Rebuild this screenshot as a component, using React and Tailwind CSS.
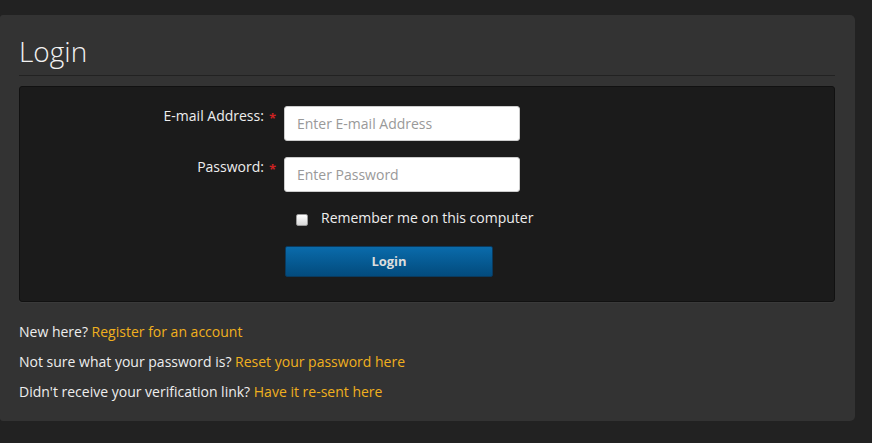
export default function App() {
  const font = { fontFamily: '"Open Sans", "Liberation Sans", sans-serif' };
  return (
    <div className="w-[872px] h-[443px] bg-[#222222] pt-[15px] overflow-hidden" style={font}>
      <div className="w-[855px] h-[406px] bg-[#333333] rounded-r-[5px] rounded-l-[3px] pt-[16px] pl-[19px] pr-[20px]">
        <div className="border-b border-[#222222] pb-[4px]">
          <h1 className="text-[28px] leading-[40px] font-light text-[#f2f2f2]">Login</h1>
        </div>
        <div className="mt-[10px] bg-[#1b1b1b] border border-[#111111] rounded-[3px] pt-[19px] pb-[24px] shadow-[0_1px_0_#3a3a3a]">
          <div className="flex items-start">
            <div className="w-[256px] text-right text-[14px] leading-5 text-[#eeeeee]">
              E-mail Address:<span className="relative top-[2px] text-[#cc2222] ml-[5px] font-bold text-[13px]">*</span>
            </div>
            <input
              className="ml-[8px] w-[236px] h-[35px] bg-white border border-[#cccccc] rounded-[3px] px-[12px] text-[14px] text-[#555] placeholder:text-[#999999] outline-none"
              placeholder="Enter E-mail Address"
              style={font}
            />
          </div>
          <div className="flex items-start mt-[16px]">
            <div className="w-[256px] text-right text-[14px] leading-5 text-[#eeeeee]">
              Password:<span className="relative top-[2px] text-[#cc2222] ml-[5px] font-bold text-[13px]">*</span>
            </div>
            <input
              type="password"
              className="ml-[8px] w-[236px] h-[35px] bg-white border border-[#cccccc] rounded-[3px] px-[12px] text-[14px] text-[#555] placeholder:text-[#999999] outline-none"
              placeholder="Enter Password"
              style={font}
            />
          </div>
          <div className="flex items-start mt-[16px] pl-[276px]">
            <span className="mt-[6px] w-[12px] h-[12px] bg-gradient-to-b from-[#ffffff] to-[#d8d8d8] border border-[#9a9a9a] rounded-[2px]"></span>
            <span className="ml-[13px] text-[14px] leading-5 text-[#eeeeee]">Remember me on this computer</span>
          </div>
          <div className="mt-[18px] pl-[265px]">
            <button
              className="w-[208px] h-[31px] rounded-[2px] border border-[#0a3a5e] bg-gradient-to-b from-[#0a6bab] to-[#034b7d] text-[13px] font-bold text-[#dddddd]"
              style={font}
            >
              Login
            </button>
          </div>
        </div>
        <div className="mt-[15px] text-[14px] leading-[30px] text-[#eeeeee]">
          <p>New here? <a className="text-[#f0b01e]">Register for an account</a></p>
          <p>Not sure what your password is? <a className="text-[#f0b01e]">Reset your password here</a></p>
          <p>Didn't receive your verification link? <a className="text-[#f0b01e]">Have it re-sent here</a></p>
        </div>
      </div>
    </div>
  );
}
